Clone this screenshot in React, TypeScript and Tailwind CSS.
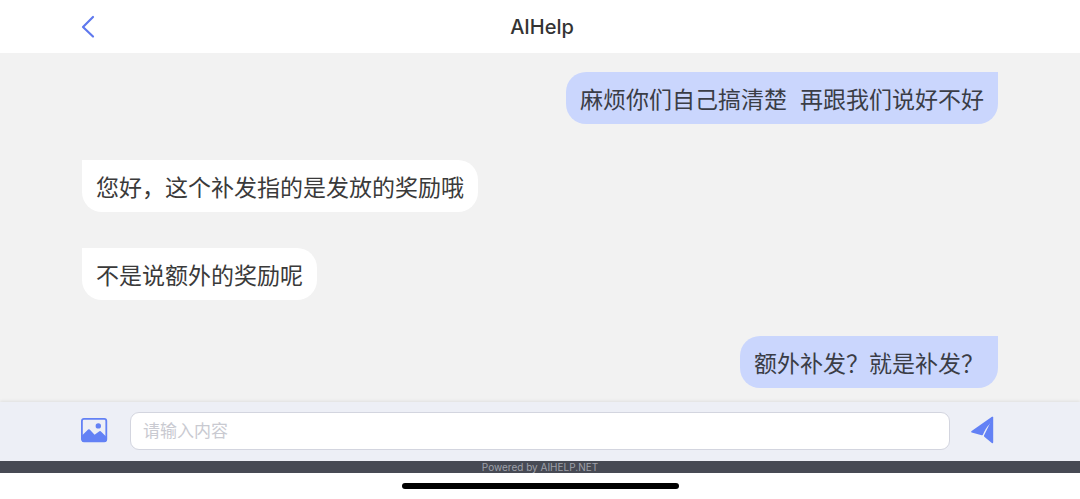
type Message = { id: number; from: 'me' | 'agent'; text: string };

const messages: Message[] = [
  { id: 1, from: 'me', text: '麻烦你们自己搞清楚  再跟我们说好不好' },
  { id: 2, from: 'agent', text: '您好，这个补发指的是发放的奖励哦' },
  { id: 3, from: 'agent', text: '不是说额外的奖励呢' },
  { id: 4, from: 'me', text: '额外补发？就是补发？' },
];

function Bubble({ from, text }: Message) {
  const side =
    from === 'me'
      ? 'self-end rounded-tl-[20px] bg-[#cad6fd] text-[#3a3d46]'
      : 'self-start rounded-tr-[20px] bg-white text-[#3a3a3a]';
  return (
    <li
      className={`rounded-b-[20px] px-[14px] pt-[11px] pb-[7px] text-[23px] leading-[34px] whitespace-pre-wrap ${side}`}
    >
      {text}
    </li>
  );
}

function BackIcon() {
  return (
    <svg width="14" height="24" viewBox="0 0 14 24" fill="none" aria-hidden="true">
      <path d="M12 2 2 12l10 9.5" stroke="#5f78ee" strokeWidth="2.2" strokeLinecap="round" strokeLinejoin="round" />
    </svg>
  );
}

function PictureIcon() {
  return (
    <svg width="28" height="26" viewBox="0 0 28 26" fill="none" aria-hidden="true">
      <rect x="1.9" y="1.9" width="24.4" height="22.4" rx="2" stroke="#6381f5" strokeWidth="1.8" />
      <circle cx="18.3" cy="8.9" r="2.7" fill="#6381f5" />
      <path
        d="M2 18.6 8.1 12.6a1.1 1.1 0 0 1 1.6 0l4.9 5.2 4.8-3.6a1 1 0 0 1 1.3 0l5.6 5.6v3.7a1.5 1.5 0 0 1-1.5 1.5H3.5A1.5 1.5 0 0 1 2 23.5Z"
        fill="#6381f5"
      />
    </svg>
  );
}

function SendIcon() {
  return (
    <svg width="24" height="28" viewBox="0 0 24 28" fill="#6381f5" aria-hidden="true">
      <path d="M.6 15 20.6 1c.8-.6 1.6-.3 1.6.5L18.4 8.6C15.6 11 13.6 15 12 18.6a1 1 0 0 1-1.3.6L.7 16.6c-.7-.2-.8-1.1-.1-1.6Z" />
      <path d="M22.2 1.5v24.7c0 1-.7 1.3-1.4.8l-7.5-6.3a1 1 0 0 1-.3-1.1L18.4 8.6l2.5-7.3c.4-.7 1.3-.7 1.3.2Z" />
    </svg>
  );
}

export default function App() {
  return (
    <div className="flex min-h-screen flex-col bg-white font-['Inter','Noto_Sans_CJK_SC',sans-serif]">
      <header className="grid h-[53px] grid-cols-[1fr_auto_1fr] items-center bg-white pr-[77px] pl-[81px]">
        <button type="button" aria-label="返回" className="justify-self-start">
          <BackIcon />
        </button>
        <h1 className="text-[20px] leading-7 font-medium text-[#333333]">AIHelp</h1>
      </header>

      <main className="flex-1 bg-[#f2f2f2] px-[82px] pt-[19px] pb-[14px]">
        <ul className="flex flex-col gap-9">
          {messages.map((message) => (
            <Bubble key={message.id} {...message} />
          ))}
        </ul>
      </main>

      <form
        className="flex h-[59px] items-center bg-[#edeff6] px-20 pb-[2px] shadow-[0_-1px_3px_rgba(0,0,0,0.08)]"
        onSubmit={(event) => event.preventDefault()}
      >
        <button type="button" aria-label="发送图片" className="shrink-0 pb-[2px]">
          <PictureIcon />
        </button>
        <input
          type="text"
          aria-label="请输入内容"
          placeholder="请输入内容"
          className="mr-[21px] ml-[22px] h-[38px] min-w-0 flex-1 rounded-[9px] border border-[#d3d5df] bg-white px-3 text-[17px] text-[#353535] outline-none placeholder:text-[#c9cad1]"
        />
        <button type="submit" aria-label="发送" className="mr-[5px] shrink-0 pb-[2px]">
          <SendIcon />
        </button>
      </form>

      <footer>
        <p className="h-3 bg-[#474a54] text-center text-[10px] leading-3 text-[#9fa1aa]">Powered by AIHELP.NET</p>
        <div className="flex h-[26px] items-center justify-center bg-white">
          <span className="h-[6px] w-[277px] rounded-full bg-black" />
        </div>
      </footer>
    </div>
  );
}
